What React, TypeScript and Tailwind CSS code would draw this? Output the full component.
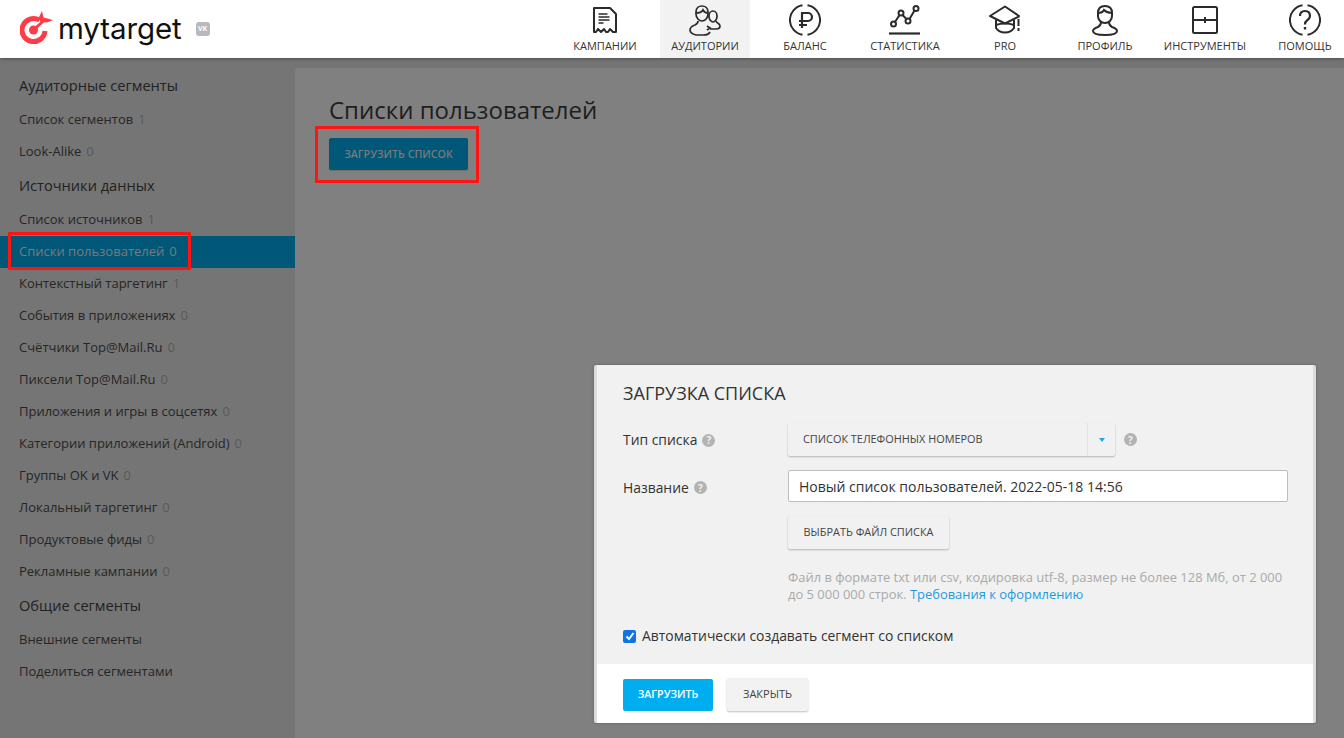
import React from "react";

const font = { fontFamily: '"Open Sans", sans-serif' };

function Help({ className = "" }: { className?: string }) {
  return (
    <span className={`inline-flex h-[13px] w-[13px] items-center justify-center rounded-full bg-[#b3b3b3] text-[10px] font-bold leading-none text-[#f0f0f0] ${className}`}>?</span>
  );
}

const S = { fill: "none", stroke: "#2b2b2b", strokeWidth: 2 } as const;

function IconCampaign() {
  return (
    <svg width="26" height="28" viewBox="0 0 26 28" {...S}>
      <path d="M2 2h16l6 6v18h-3l-3-3-2 3h-2l-2-3-3 3H9l-3-3-2 3H2z" strokeLinejoin="round" />
      <path d="M6.500 8h9M6.500 11h11M6.500 14h11M6.500 17h5" strokeWidth="1.600" />
    </svg>
  );
}
function IconAudience() {
  return (
    <svg width="32" height="32" viewBox="0 0 32 32" {...S} strokeWidth="1.700">
      <path d="M7 8c0-4 3-6 6-6s6 2 6 6v2c0 4-3 7-6 7s-6-3-6-7z" />
      <path d="M7 9c3 0 6-1 7-3 1 2 3 3 5 3" />
      <path d="M9 17c0 2-1 3-3 4-3 1-5 3-5 5 0 2 2 4 6 5h8c3 0 5-1 6-3" />
      <path d="M18 26l3-2-3-2" />
      <path d="M20 12c0-3 2-5 4-5s4 2 4 5v1c0 2-2 5-4 5s-4-3-4-5z" />
      <path d="M27 17c0 2 4 2 4 5 0 2-2 3-4 3h-6" />
    </svg>
  );
}
function IconRuble() {
  return (
    <svg width="32" height="32" viewBox="0 0 32 32" {...S}>
      <path d="M18.500 1.200A15 15 0 0 1 18.500 30.800" />
      <path d="M13.500 30.800A15 15 0 0 1 13.500 1.200" />
      <path d="M13 24V9h6a4 4 0 0 1 0 8h-9M10 21h8" strokeWidth="2.200" />
    </svg>
  );
}
function IconStats() {
  return (
    <svg width="32" height="30" viewBox="0 0 32 30" {...S}>
      <path d="M0 28.500h31" strokeWidth="2.200" />
      <circle cx="4.500" cy="19" r="2.500" />
      <circle cx="12" cy="8" r="2.500" />
      <circle cx="19" cy="16" r="2.500" />
      <circle cx="27" cy="3.500" r="2.500" />
      <path d="M6 17l4.500-7M13.500 10l4 4M20.500 14l5-8.500" />
    </svg>
  );
}
function IconPro() {
  return (
    <svg width="32" height="30" viewBox="0 0 32 30" {...S}>
      <path d="M16 1.500 1 11l15 7.500 13-6.500c1 0 1-1 1-1z" strokeLinejoin="round" />
      <path d="M7 14.500V23c2 3 5 4.500 9 4.500s7-1.500 9-4.500v-8.500" />
      <path d="M7 20c5-2 13-2 18 0" />
      <path d="M29.500 14v7M29.500 23v3" />
    </svg>
  );
}
function IconProfile() {
  return (
    <svg width="26" height="32" viewBox="0 0 26 32" {...S}>
      <path d="M6 9c0-5 3-7 7-7s7 2 7 7v3c0 4-3 7-7 7s-7-3-7-7z" />
      <path d="M6 9c3 0 5-1 6-3 2 2 5 3 8 3" />
      <path d="M9 18c0 3-1 4-3 5-3 1-5 2-5 4 0 3 5 4 12 4s12-1 12-4c0-2-2-3-5-4-2-1-3-2-3-5" />
    </svg>
  );
}
function IconTools() {
  return (
    <svg width="26" height="28" viewBox="0 0 26 28" {...S}>
      <rect x="1" y="1" width="24" height="26" rx="1.500" />
      <path d="M1 14h24M13 11v6" />
    </svg>
  );
}
function IconHelp() {
  return (
    <svg width="32" height="32" viewBox="0 0 32 32" {...S}>
      <path d="M18.500 1.200A15 15 0 0 1 18.500 30.800" />
      <path d="M13.500 30.800A15 15 0 0 1 13.500 1.200" />
      <path d="M11 12c0-3 2-5 5-5s5 2 5 5c0 2-1 3-3 4.500-1.500 1-2 2-2 4" strokeWidth="2.200" />
      <path d="M16 23v2.500" strokeWidth="2.400" />
    </svg>
  );
}

const nav: { label: string; icon: React.ReactNode; active?: boolean }[] = [
  { label: "КАМПАНИИ", icon: <IconCampaign /> },
  { label: "АУДИТОРИИ", icon: <IconAudience />, active: true },
  { label: "БАЛАНС", icon: <IconRuble /> },
  { label: "СТАТИСТИКА", icon: <IconStats /> },
  { label: "PRO", icon: <IconPro /> },
  { label: "ПРОФИЛЬ", icon: <IconProfile /> },
  { label: "ИНСТРУМЕНТЫ", icon: <IconTools /> },
  { label: "ПОМОЩЬ", icon: <IconHelp /> },
];

type Row = { t: string; n?: number; h?: boolean; a?: boolean };
const rows: Row[] = [
  { t: "Аудиторные сегменты", h: true },
  { t: "Список сегментов", n: 1 },
  { t: "Look-Alike", n: 0 },
  { t: "Источники данных", h: true },
  { t: "Список источников", n: 1 },
  { t: "Списки пользователей", n: 0, a: true },
  { t: "Контекстный таргетинг", n: 1 },
  { t: "События в приложениях", n: 0 },
  { t: "Счётчики Top@Mail.Ru", n: 0 },
  { t: "Пиксели Top@Mail.Ru", n: 0 },
  { t: "Приложения и игры в соцсетях", n: 0 },
  { t: "Категории приложений (Android)", n: 0 },
  { t: "Группы OK и VK", n: 0 },
  { t: "Локальный таргетинг", n: 0 },
  { t: "Продуктовые фиды", n: 0 },
  { t: "Рекламные кампании", n: 0 },
  { t: "Общие сегменты", h: true },
  { t: "Внешние сегменты" },
  { t: "Поделиться сегментами" },
];

export default function App() {
  return (
    <div style={font} className="flex h-[738px] w-[1344px] flex-col overflow-hidden bg-[#757575]">
      <header className="relative z-10 flex h-[58px] shrink-0 overflow-hidden bg-white shadow-[0_1px_3px_rgba(0,0,0,0.35)]">
        <div className="flex w-[560px] shrink-0 items-start pl-[20px] pt-[10px]">
          <svg width="33" height="35" viewBox="0 0 33 35" className="shrink-0">
            <path d="M19.500 10.200A11.500 11.500 0 1 0 25 21" fill="none" stroke="#ff3b47" strokeWidth="5" />
            <circle cx="13.500" cy="20" r="4.500" fill="#ff3b47" />
            <path d="M14 19.500 25 9.500" stroke="#ff3b47" strokeWidth="3" />
            <path d="M22 1l1.500 6.500L33 10l-6 2.500-6.500-.5-1.500-5z" fill="#ff3b47" />
          </svg>
          <span style={{ fontFamily: "Inter, sans-serif" }} className="ml-[5px] mt-[1px] text-[29.500px] font-normal leading-[34px] tracking-[-0.1px] text-[#111]">mytarget</span>
          <span className="ml-[14px] mt-[12px] flex h-[14px] w-[14px] items-center justify-center rounded-[3px] bg-[#b8b8bf] text-[7px] font-bold text-white">VK</span>
        </div>
        <nav className="flex shrink-0 gap-[10px]">
          {nav.map((n) => (
            <div key={n.label} className={`flex h-[58px] w-[90px] shrink-0 flex-col items-center ${n.active ? "bg-[#f2f2f2]" : ""}`}>
              <div className="flex h-[36px] w-full items-center justify-center pt-[3px]">{n.icon}</div>
              <div className="mt-[2px] whitespace-nowrap text-[11px] leading-[15px] text-[#333]">{n.label}</div>
            </div>
          ))}
        </nav>
      </header>
      <div className="flex min-h-0 flex-1">
        <aside className="w-[295px] shrink-0 bg-[#757575] pt-[10px]">
          {rows.map((r) =>
            r.h ? (
              <div key={r.t} className="flex h-[36px] items-start pl-[19px] pt-[6px] text-[14.600px] font-normal leading-[22px] text-[#222]">{r.t}</div>
            ) : (
              <div key={r.t} className={`flex h-[32px] items-center pl-[19px] text-[13px] ${r.a ? "relative bg-[#005778] text-[#7a7a7a]" : "text-[#262626]"}`}>
                <span>{r.t}</span>
                {r.n !== undefined && <span className={`ml-[5px] ${r.a ? "text-[#7a7a7a]" : "text-[#5a5a5a]"}`}>{r.n}</span>}
                {r.a && <span className="absolute left-[8px] top-[-4px] h-[38px] w-[183px] rounded-[1px] border-[3px] border-[#ff1414]" />}
              </div>
            )
          )}
        </aside>
        <main className="relative mt-[10px] flex-1 rounded-tl-[4px] bg-[#808080] pl-[34px] pt-[26px]">
          <h1 className="text-[24px] font-normal leading-[32px] text-[#1e1e1e]">Списки пользователей</h1>
          <div className="relative mt-[12px] h-[32px] w-[139px]">
            <button className="h-[32px] w-[139px] rounded-[2px] bg-[#005778] text-[10.700px] font-semibold text-[#7a7a7a] shadow-[0_1px_1px_rgba(0,0,0,0.15)]">ЗАГРУЗИТЬ СПИСОК</button>
            <span className="absolute left-[-14px] top-[-12px] h-[57px] w-[164px] rounded-[1px] border-[3px] border-[#ff1414]" />
          </div>
          <section className="absolute left-[299px] top-[297px] flex h-[358px] w-[722px] flex-col overflow-hidden rounded-[2px] border-x-[3px] border-x-[#dcdcdc] bg-[#f1f1f1] shadow-[0_0_3px_rgba(0,0,0,0.3)]">
            <div className="flex-1 pl-[26px] pt-[16px]">
              <h2 className="text-[18px] font-normal leading-[24px] text-[#333]">ЗАГРУЗКА СПИСКА</h2>
              <div className="mt-[18px] flex h-[33px] items-center">
                <div className="flex w-[165px] items-center pt-[2px] text-[13.900px] text-[#333]">Тип списка<Help className="ml-[5px]" /></div>
                <div className="flex h-[33px] w-[327px] items-center rounded-[2px] text-[10.900px] font-medium text-[#444] shadow-[0_1px_2px_rgba(0,0,0,0.25)]">
                  <span className="flex-1 pl-[15px]">СПИСОК ТЕЛЕФОННЫХ НОМЕРОВ</span>
                  <span className="flex h-full w-[28px] items-center justify-center border-l border-l-[#e2e2e2]">
                    <span className="h-0 w-0 border-x-[3.500px] border-t-[4px] border-x-transparent border-t-[#1da8ee]" />
                  </span>
                </div>
                <Help className="ml-[9px]" />
              </div>
              <div className="mt-[14px] flex h-[32px] items-center">
                <div className="flex w-[165px] items-center pt-[4px] text-[13.900px] text-[#333]">Название<Help className="ml-[5px]" /></div>
                <div className="flex h-[32px] w-[500px] items-center rounded-[2px] border border-[#bdbdbd] bg-white pl-[10px] text-[14px] text-[#333]">Новый список пользователей. 2022-05-18 14:56</div>
              </div>
              <div className="ml-[165px] mt-[14px] flex h-[33px] w-[161px] items-center justify-center rounded-[2px] text-[10.900px] font-medium text-[#444] shadow-[0_1px_2px_rgba(0,0,0,0.25)]">ВЫБРАТЬ ФАЙЛ СПИСКА</div>
              <p className="ml-[165px] mt-[20px] w-[510px] text-[12.950px] leading-[17px] text-[#aaa]">Файл в формате txt или csv, кодировка utf-8, размер не более 128 Мб, от 2 000 до 5 000 000 строк. <span className="text-[#1c9be0]">Требования к оформлению</span></p>
              <div className="mt-[23px] flex items-center text-[13.900px] text-[#333]">
                <span className="flex h-[13px] w-[13px] items-center justify-center rounded-[2px] bg-[#0b75e6]">
                  <svg width="10" height="10" viewBox="0 0 10 10" fill="none" stroke="white" strokeWidth="2"><path d="M1.500 5.500 4 8l4.500-6" /></svg>
                </span>
                <span className="ml-[6px]">Автоматически создавать сегмент со списком</span>
              </div>
            </div>
            <div className="flex h-[59px] items-center bg-white pt-[2px] pl-[26px]">
              <div className="flex h-[32px] w-[90px] items-center justify-center rounded-[2px] bg-[#00aef0] text-[10.700px] font-semibold text-white">ЗАГРУЗИТЬ</div>
              <div className="ml-[14px] flex h-[33px] w-[81px] items-center justify-center rounded-[2px] bg-[#f2f2f2] text-[11px] font-medium text-[#444] shadow-[0_1px_2px_rgba(0,0,0,0.25)]">ЗАКРЫТЬ</div>
            </div>
          </section>
        </main>
      </div>
    </div>
  );
}
